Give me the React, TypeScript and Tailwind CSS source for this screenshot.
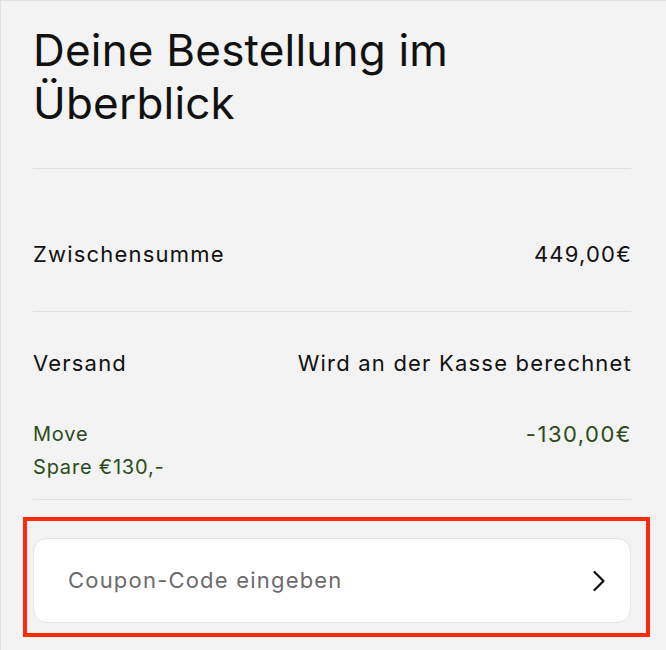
import React from 'react';

type Row = { label: string; value: string };

const rows: Row[] = [
  { label: 'Zwischensumme', value: '449,00€' },
  { label: 'Versand', value: 'Wird an der Kasse berechnet' },
];

function ChevronRight() {
  return (
    <svg width="14" height="22" viewBox="0 0 14 22" fill="none" className="text-[#111]">
      <path d="M2.5 2 L11.5 11 L2.5 20" stroke="currentColor" strokeWidth="2.2" strokeLinecap="round" strokeLinejoin="round" />
    </svg>
  );
}

export default function App() {
  return (
    <div
      className="min-h-[650px] border-l border-t border-[#e2e2e2] bg-[#f3f3f3] pl-[32px] pr-[35px] text-[#111]"
      style={{ fontFamily: 'Inter, "Liberation Sans", sans-serif' }}
    >
      <h1 className="pt-[23px] text-[44px] font-normal leading-[53px] tracking-[0.2px]">
        Deine Bestellung im
        <br />
        Überblick
      </h1>

      <div className="mt-[38px] h-px bg-[#e0e0e0]" />

      {/* Zwischensumme */}
      <div className="flex items-baseline justify-between pt-[71px] pb-[43px] text-[22px] leading-[28px] tracking-[1.2px]">
        <span>{rows[0].label}</span>
        <span className="-mr-[1px]">{rows[0].value}</span>
      </div>

      <div className="h-px bg-[#e0e0e0]" />

      {/* Versand */}
      <div className="flex items-baseline justify-between pt-[37px] text-[22px] leading-[28px] tracking-[1.2px]">
        <span>{rows[1].label}</span>
        <span className="-mr-[1px]">{rows[1].value}</span>
      </div>

      {/* Rabatt */}
      <div className="flex items-start justify-between pt-[44px] pb-[19px] text-[#2b4a1b]">
        <div className="flex flex-col gap-[7px] text-[20px] leading-[26px] tracking-[0.8px]">
          <span>Move</span>
          <span>Spare €130,-</span>
        </div>
        <span className="-mr-[1px] text-[22px] leading-[26px] tracking-[1.5px]">-130,00€</span>
      </div>

      <div className="h-px bg-[#e0e0e0]" />

      <div className="relative mt-[38px]">
        <button
          type="button"
          className="flex h-[85px] w-full items-center justify-between rounded-[14px] border border-[#e2e2e2] bg-white pl-[34px] pr-[24px] text-left"
        >
          <span className="text-[22px] tracking-[1.2px] text-[#6b6b6b]">Coupon-Code eingeben</span>
          <ChevronRight />
        </button>
        <div className="pointer-events-none absolute -top-[21px] -bottom-[14px] -left-[10px] -right-[19px] border-4 border-[#ff2a0a]" />
      </div>
    </div>
  );
}
